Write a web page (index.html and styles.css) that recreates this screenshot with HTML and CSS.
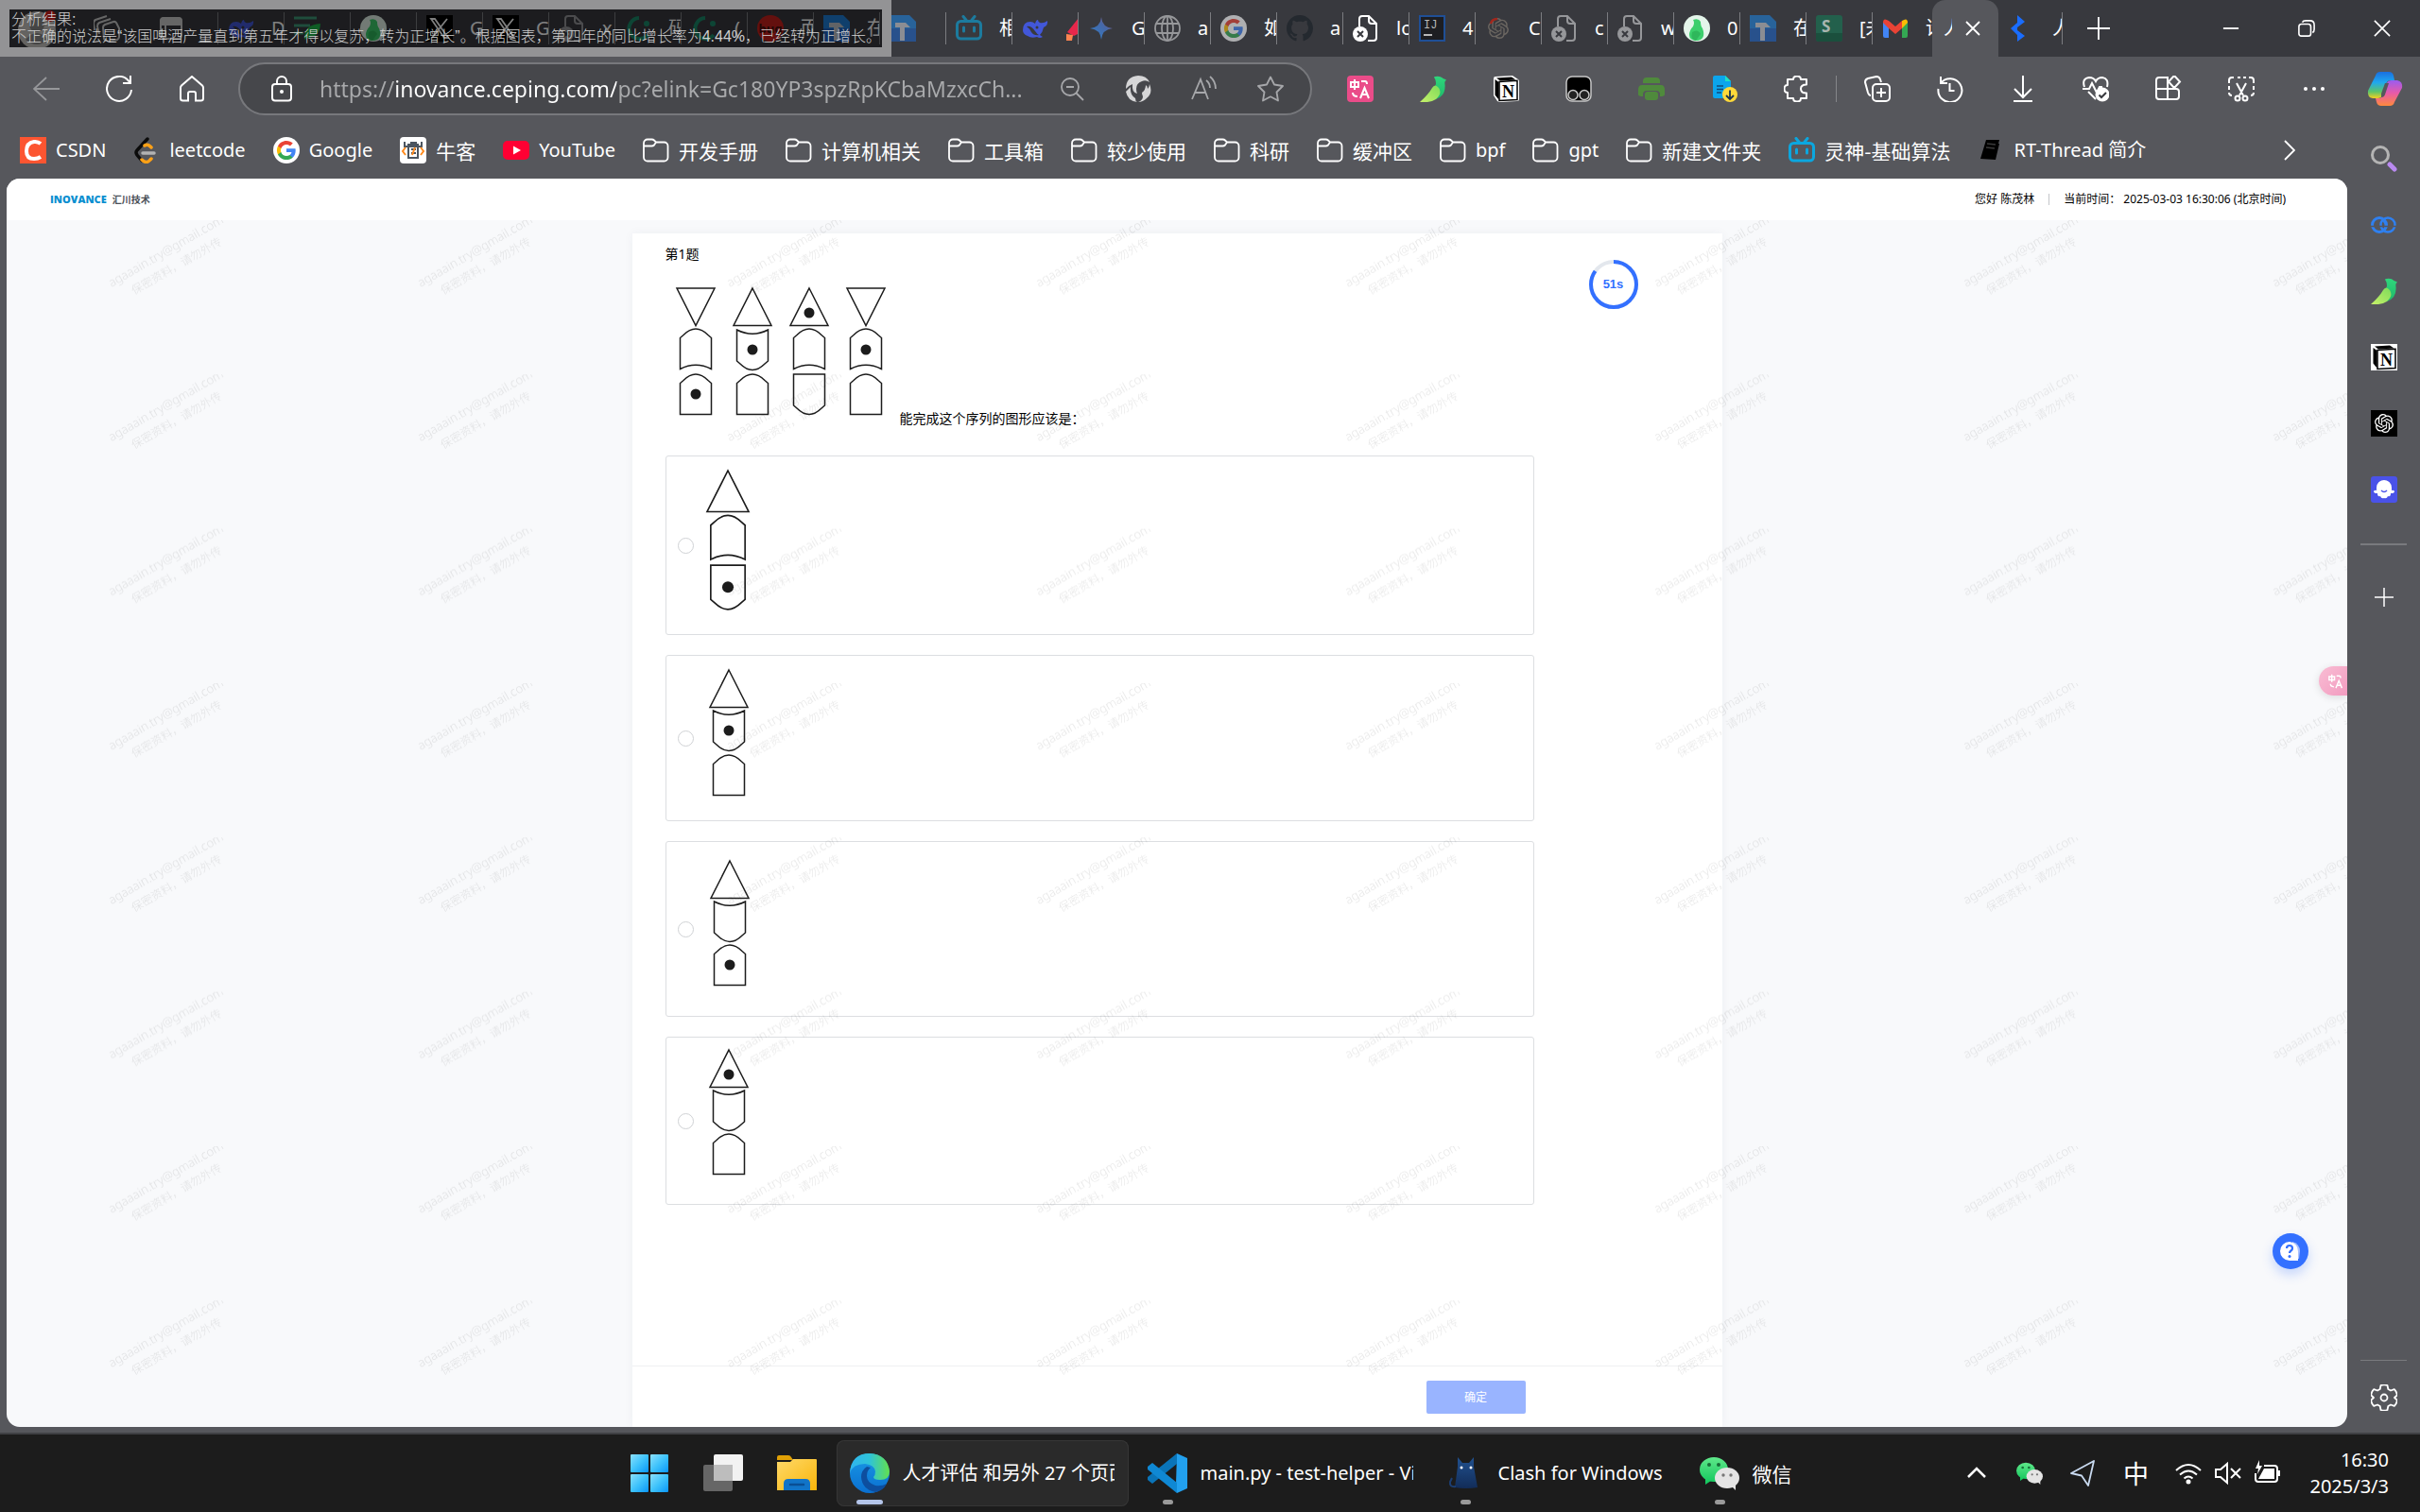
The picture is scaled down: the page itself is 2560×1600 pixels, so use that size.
FILE: index.html
```html
<!DOCTYPE html>
<html lang="zh-CN">
<head>
<meta charset="utf-8">
<title>人才评估</title>
<link rel="stylesheet" href="styles.css">
</head>
<body>
<svg class="defs" aria-hidden="true">
  <defs>
    <linearGradient id="g-bird" x1="0" y1="0" x2="0" y2="1"><stop offset="0" stop-color="#2fd67c"/><stop offset="1" stop-color="#1fb96a"/></linearGradient>
    <linearGradient id="g-wing" x1="0" y1="1" x2="1" y2="0"><stop offset="0" stop-color="#c8f06a"/><stop offset="1" stop-color="#7ddc5a"/></linearGradient>
    <linearGradient id="g-gem" x1="0" y1="1" x2="1" y2="0"><stop offset="0" stop-color="#2f7fc8"/><stop offset=".6" stop-color="#4668a8"/><stop offset="1" stop-color="#9a5a78"/></linearGradient>
    <linearGradient id="g-win" x1="0" y1="0" x2="1" y2="1"><stop offset="0" stop-color="#8be0fd"/><stop offset=".5" stop-color="#3fc3fb"/><stop offset="1" stop-color="#0a96f7"/></linearGradient>
    <linearGradient id="g-folder" x1="0" y1="0" x2="1" y2="1"><stop offset="0" stop-color="#ffd968"/><stop offset="1" stop-color="#f9b50a"/></linearGradient>
    <linearGradient id="g-edge" x1="0" y1="0" x2="1" y2="0"><stop offset="0" stop-color="#2fb4f0"/><stop offset=".5" stop-color="#2fc3d8"/><stop offset="1" stop-color="#63e04c"/></linearGradient>
    <linearGradient id="g-edge2" x1="0" y1="0" x2="0" y2="1"><stop offset="0" stop-color="#1a9ae6"/><stop offset="1" stop-color="#0a6fd0"/></linearGradient>
    <linearGradient id="g-cop1" x1="0" y1="0" x2="0" y2="1"><stop offset="0" stop-color="#1a6fe0"/><stop offset=".4" stop-color="#1fa8f0"/><stop offset=".75" stop-color="#5cc46a"/><stop offset="1" stop-color="#f4d020"/></linearGradient>
    <linearGradient id="g-cop2" x1="0" y1="0" x2="0" y2="1"><stop offset="0" stop-color="#9a5cf0"/><stop offset=".5" stop-color="#e85aa8"/><stop offset="1" stop-color="#ff8a3c"/></linearGradient>
    <linearGradient id="g-wx" x1="0" y1="0" x2="0" y2="1"><stop offset="0" stop-color="#5fe88a"/><stop offset="1" stop-color="#10c65c"/></linearGradient>
    <linearGradient id="g-cat" x1="0" y1="0" x2="0" y2="1"><stop offset="0" stop-color="#21518f"/><stop offset="1" stop-color="#122c58"/></linearGradient>

    <path id="f-up" d="M0 0L20 39.500H-20Z"/>
    <path id="f-down" d="M-20 0H20L0 39.500Z"/>
    <path id="f-arch" d="M-16.500 42.500V9.500L-13 6.500Q0 -6.500 13 6.500L16.500 9.500V42.500Q0 34 -16.500 42.500Z"/>
    <path id="f-bowl" d="M-16.500 0Q0 8.500 16.500 0V33L13 36Q0 49 -13 36L-16.500 33Z"/>
    <path id="f-house" d="M-16.500 42.500V9.500L-13 6.500Q0 -6.500 13 6.500L16.500 9.500V42.500Z"/>
    <path id="f-cup" d="M-16.500 0H16.500V33L13 36Q0 49 -13 36L-16.500 33Z"/>

    <symbol id="i-folder" viewBox="0 0 28 28"><path d="M1 6.500a4 4 0 0 1 4-4h4.500q1.500 0 2.500 1l2 2h8.500a4 4 0 0 1 4 4v12a4 4 0 0 1-4 4H5a4 4 0 0 1-4-4ZM1 9.500h8.500q1.500 0 2.500-1l2-3" fill="none" stroke="#fff" stroke-width="1.800"/></symbol>
    <symbol id="i-google" viewBox="0 0 24 24"><path fill="#4285f4" d="M22.560 12.250c0-.78-.07-1.530-.2-2.250H12v4.260h5.920c-.26 1.370-1.040 2.530-2.210 3.310v2.770h3.570c2.080-1.920 3.280-4.740 3.280-8.090z"/><path fill="#34a853" d="M12 23c2.970 0 5.460-.98 7.280-2.660l-3.570-2.770c-.98.660-2.230 1.060-3.710 1.060-2.860 0-5.290-1.930-6.160-4.530H2.180v2.840C3.990 20.530 7.700 23 12 23z"/><path fill="#fbbc05" d="M5.840 14.090c-.22-.66-.35-1.360-.35-2.090s.13-1.430.35-2.090V7.070H2.180C1.430 8.550 1 10.220 1 12s.43 3.450 1.180 4.930l2.850-2.220.81-.62z"/><path fill="#ea4335" d="M12 5.380c1.620 0 3.060.56 4.210 1.640l3.150-3.150C17.450 2.090 14.970 1 12 1 7.700 1 3.990 3.470 2.180 7.070l3.660 2.840c.87-2.600 3.300-4.530 6.160-4.530z"/></symbol>
    <symbol id="i-google-disc" viewBox="0 0 28 28"><circle cx="14" cy="14" r="14" fill="#fff"/><use href="#i-google" x="3" y="3" width="22" height="22"/></symbol>
    <symbol id="i-bird" viewBox="0 0 28 28"><path d="M15 2q0-1 1.500-1 5-1 8 2l2.500 1q1.500.5 0 1.500-1 1-.5 4 1 12-9.500 15.500L12 20 17 9Q17 4 15 2Z" fill="url(#g-bird)"/><path d="M0 28Q9 20 13 13q3-5 7 0 4 6-3 12-6 4-17 3Z" fill="url(#g-wing)"/></symbol>
    <symbol id="i-birddisc" viewBox="0 0 28 28"><circle cx="14" cy="14" r="14" fill="#e4f5ea"/><path d="M10 5q6-2 8 2 0 5 2 7 4 11-5 13-9 0-9-6 0-5 4-9 2-4 0-7Z" fill="#3ccf6c"/><path d="M9 18q6-4 9 2l-5 7q-6-1-4-9Z" fill="#2fb75b"/></symbol>
    <symbol id="i-bili" viewBox="0 0 28 28"><path d="M8 1.500l4 5M20 1.500l-4 5" stroke="#0ba7df" stroke-width="3" stroke-linecap="round"/><rect x="1.500" y="6.500" width="25" height="18.500" rx="4" fill="none" stroke="#0ba7df" stroke-width="3"/><path d="M8.500 13v4M19.500 13v4" stroke="#0ba7df" stroke-width="3" stroke-linecap="round"/></symbol>
    <symbol id="i-docx" viewBox="0 0 28 28"><path d="M7 12V4q0-3 3-3h7l8 8v15q0 3-3 3h-6M17 1v5q0 3 3 3h5" fill="none" stroke="currentColor" stroke-width="2"/><circle cx="8" cy="20" r="8" fill="currentColor"/><path d="M5 17l6 6M11 17l-6 6" stroke="#38393e" stroke-width="2"/></symbol>
    <symbol id="i-whale" viewBox="0 0 28 28"><path d="M1 16q0-9 8-9 3 0 5 2 1-4 3-4 0 2 2 3 4 1 8-2 1 5-4 7-1 5-4 8l3 2q-3 2-6 0-6 2-10-1-5-2-5-6Z" fill="#4257d8"/><path d="M5 12q5-1 9 5 2 3 4 4-5 1-8-3-2-4-5-6Z" fill="#38393e"/><circle cx="16" cy="13" r="1.500" fill="#38393e"/></symbol>
    <symbol id="i-juejin" viewBox="0 0 28 28"><path d="M0 0h21l7 7v21H0Z" fill="#1e7fd8"/><path d="M0 14h28v14H0Z" fill="#1f4fb0" opacity=".6"/><path d="M6 8h11l5 5h-6v14h-5V13H6Z" fill="#c2c6cc"/></symbol>
    <symbol id="i-x" viewBox="0 0 28 28"><rect width="28" height="28" fill="#000"/><path d="M5 4h4l14 20h-4ZM22 4L6 24" fill="none" stroke="#fff" stroke-width="1.800"/></symbol>
    <symbol id="i-ring" viewBox="0 0 28 28"><path d="M15 3a11 11 0 1 0 9 18" fill="none" stroke="#1a8b6a" stroke-width="4"/><circle cx="23" cy="9" r="3" fill="#1a8b6a"/></symbol>
    <symbol id="i-github" viewBox="0 0 16 16"><path fill="#24292f" d="M8 0C3.580 0 0 3.580 0 8c0 3.540 2.290 6.530 5.470 7.590.4.070.55-.17.55-.38 0-.19-.01-.82-.01-1.490-2.010.370-2.530-.49-2.690-.94-.09-.23-.48-.94-.82-1.130-.28-.15-.68-.52-.01-.53.63-.01 1.080.580 1.230.820.72 1.210 1.870.870 2.330.660.07-.52.28-.87.51-1.070-1.780-.2-3.640-.89-3.640-3.950 0-.87.31-1.590.820-2.150-.08-.2-.36-1.020.08-2.120 0 0 .67-.21 2.200.820.640-.18 1.320-.27 2-.27s1.360.090 2 .27c1.530-1.040 2.200-.82 2.200-.82.44 1.100.160 1.920.080 2.120.510.560.820 1.270.820 2.150 0 3.070-1.870 3.750-3.650 3.950.290.250.540.730.540 1.480 0 1.070-.01 1.930-.01 2.200 0 .21.15.46.55.38A8 8 0 0016 8c0-4.420-3.580-8-8-8z"/></symbol>
    <symbol id="i-openai" viewBox="0 0 24 24"><path d="M22.2819 9.8211a5.9847 5.9847 0 0 0-.5157-4.9108 6.0462 6.0462 0 0 0-6.5098-2.9A6.0651 6.0651 0 0 0 4.9807 4.1818a5.9847 5.9847 0 0 0-3.9977 2.9 6.0462 6.0462 0 0 0 .7427 7.0966 5.98 5.98 0 0 0 .511 4.9107 6.051 6.051 0 0 0 6.5146 2.9001A5.9847 5.9847 0 0 0 13.2599 24a6.0557 6.0557 0 0 0 5.7718-4.2058 5.9894 5.9894 0 0 0 3.9977-2.9001 6.0557 6.0557 0 0 0-.7475-7.0729zm-9.022 12.6081a4.4755 4.4755 0 0 1-2.8764-1.0408l.1419-.0804 4.7783-2.7582a.7948.7948 0 0 0 .3927-.6813v-6.7369l2.02 1.1686a.071.071 0 0 1 .038.052v5.5826a4.504 4.504 0 0 1-4.4945 4.4944zm-9.6607-4.1254a4.4708 4.4708 0 0 1-.5346-3.0137l.142.0852 4.783 2.7582a.7712.7712 0 0 0 .7806 0l5.8428-3.3685v2.3324a.0804.0804 0 0 1-.0332.0615L9.74 19.9502a4.4992 4.4992 0 0 1-6.1408-1.6464zM2.3408 7.8956a4.485 4.485 0 0 1 2.3655-1.9728V11.6a.7664.7664 0 0 0 .3879.6765l5.8144 3.3543-2.0201 1.1685a.0757.0757 0 0 1-.071 0l-4.8303-2.7865A4.504 4.504 0 0 1 2.3408 7.872zm16.5963 3.8558L13.1038 8.364 15.1192 7.2a.0757.0757 0 0 1 .071 0l4.8303 2.7913a4.4944 4.4944 0 0 1-.6765 8.1042v-5.6772a.79.79 0 0 0-.407-.667zm2.0107-3.0231l-.142-.0852-4.7735-2.7818a.7759.7759 0 0 0-.7854 0L9.409 9.2297V6.8974a.0662.0662 0 0 1 .0284-.0615l4.8303-2.7866a4.4992 4.4992 0 0 1 6.6802 4.66zM8.3065 12.863l-2.02-1.1638a.0804.0804 0 0 1-.038-.0567V6.0742a4.4992 4.4992 0 0 1 7.3757-3.4537l-.142.0805L8.704 5.459a.7948.7948 0 0 0-.3927.6813zm1.0976-2.3654l2.602-1.4998 2.6069 1.4998v2.9994l-2.5974 1.4997-2.6067-1.4997Z" fill="currentColor"/></symbol>
    <symbol id="i-trans" viewBox="0 0 28 28"><path d="M4 7h8v5H4ZM8 4v11" fill="none" stroke="#fff" stroke-width="2"/><path d="M15 6h4q2 0 2 3M6 18q0 4 5 4M14 24l4.500-11L23 24M16 20h5" fill="none" stroke="#fff" stroke-width="2"/></symbol>
    <symbol id="i-notion" viewBox="0 0 28 28"><path d="M1 3q0-2 2-2L21 0l6 4q1 1 1 2v19q0 2-2 2L8 28q-2 0-3-1l-4-6Z" fill="#fff"/><path d="M2.500 4l4 3v18.500l-4-5ZM4 2.500L20 1.500l4.500 3L8 5.500Z" fill="#000"/><path d="M7 6.500l19-1.200V25.500L7 26.500Z" fill="#fff" stroke="#000" stroke-width="1.500"/><text x="16.500" y="22.500" text-anchor="middle" font-family="Liberation Serif, serif" font-weight="bold" font-size="18">N</text></symbol>
    <symbol id="i-wx" viewBox="0 0 42 42"><path d="M15 4a15 13 0 1 0 0 26q2 0 4-.5a15 13 0 0 0 11-12A15 13 0 0 0 15 4ZM6 27l0 6 6-4Z" fill="url(#g-wx)"/><circle cx="10" cy="12" r="2" fill="#186f39"/><circle cx="20" cy="12" r="2" fill="#186f39"/><ellipse cx="29" cy="26" rx="13" ry="11" fill="#e4e4e4"/><path d="M34 35l4 4V32Z" fill="#e4e4e4"/><circle cx="25" cy="23" r="1.700" fill="#777"/><circle cx="33" cy="23" r="1.700" fill="#777"/></symbol>
  </defs>
</svg>

<div class="browser">
  <header class="tabstrip">
    <div class="tab-tools">
      <svg class="avatar" viewBox="0 0 40 44"><circle cx="20" cy="24" r="20" fill="#c9c6c2"/><circle cx="20" cy="18" r="8" fill="#8a8a8a"/><path d="M8 34q12-14 24 0-12 10-24 0Z" fill="#8a8a8a"/><circle cx="34" cy="9" r="6" fill="#d31f1f"/></svg>
      <svg class="ic" viewBox="0 0 28 28"><path d="M10 13q0-2 2-3l9-3q2-.5 3 1l3 6v9q0 2-2 3l-10 2q-3 0-4-3ZM6 20l-2-8q0-3 2-4l12-4M1 16L0 9q0-3 2-4l12-4" fill="none" stroke="#ccc" stroke-width="2"/></svg>
      <svg class="ic" viewBox="0 0 28 28"><rect x="3" y="3" width="22" height="22" rx="4" fill="none" stroke="#ccc" stroke-width="2"/><path d="M3 10V6q0-3 3-3h16q3 0 3 3v4ZM8 10v15" fill="#ccc" stroke="#ccc" stroke-width="2"/></svg>
    </div>
    <nav class="tabs">
      <a class="tab" href="#"><svg class="ic"><use href="#i-whale"/></svg><span>D</span></a>
      <a class="tab" href="#"><svg class="ic" viewBox="0 0 28 28"><path d="M0 3h24M0 11h17M0 19h10" stroke="#3f9a78" stroke-width="3"/><path d="M11 26q-1-16 17-17-1 15-14 15Z" fill="#1fb84a"/></svg><span></span></a>
      <a class="tab" href="#"><svg class="ic"><use href="#i-birddisc"/></svg><span></span></a>
      <a class="tab" href="#"><svg class="ic"><use href="#i-x"/></svg><span>G</span></a>
      <a class="tab" href="#"><svg class="ic"><use href="#i-x"/></svg><span>G</span></a>
      <a class="tab faded" href="#"><svg class="ic"><use href="#i-docx"/></svg><span>x</span></a>
      <a class="tab" href="#"><svg class="ic"><use href="#i-ring"/></svg><span>码</span></a>
      <a class="tab" href="#"><svg class="ic"><use href="#i-ring"/></svg><span>(</span></a>
      <a class="tab" href="#"><svg class="ic" viewBox="0 0 28 28"><circle cx="14" cy="14" r="14" fill="#c8201c"/><text x="14" y="19" text-anchor="middle" font-family="Noto Sans, sans-serif" font-weight="bold" font-size="13" fill="#44100e">bug</text></svg><span>而</span></a>
      <a class="tab" href="#"><svg class="ic"><use href="#i-juejin"/></svg><span>在</span></a>
      <a class="tab dim" href="#"><svg class="ic"><use href="#i-juejin"/></svg><span></span></a>
      <a class="tab dim" href="#"><svg class="ic"><use href="#i-bili"/></svg><span>相</span></a>
      <a class="tab" href="#"><svg class="ic"><use href="#i-whale"/></svg><span><svg class="rocket" viewBox="0 0 20 28"><path d="M2 18L14 3l3 3v12l-8 4Z" fill="#e8274b"/><path d="M1 20l7 1-1 6H1Z" fill="#ff8450"/></svg></span></a>
      <a class="tab" href="#"><svg class="ic" viewBox="0 0 28 28"><path d="M14 2Q15 13 26 14 15 15 14 26 13 15 2 14 13 13 14 2Z" fill="url(#g-gem)"/></svg><span>G</span></a>
      <a class="tab faded" href="#"><svg class="ic" viewBox="0 0 28 28" fill="none" stroke="currentColor" stroke-width="1.800"><circle cx="14" cy="14" r="13"/><ellipse cx="14" cy="14" rx="6" ry="13"/><path d="M2 9h24M2 19h24M14 1v26"/></svg><span>a</span></a>
      <a class="tab dim" href="#"><svg class="ic"><use href="#i-google-disc"/></svg><span>如</span></a>
      <a class="tab" href="#"><svg class="ic"><use href="#i-github"/></svg><span>a</span></a>
      <a class="tab" href="#"><svg class="ic"><use href="#i-docx"/></svg><span>lo</span></a>
      <a class="tab" href="#"><svg class="ic" viewBox="0 0 28 28"><rect x="1" y="1" width="26" height="26" fill="#1d1e22" stroke="#1f4f96" stroke-width="2"/><text x="5" y="14" font-family="Liberation Mono, monospace" font-size="12" fill="#b8b8b8">IJ</text><path d="M5 21h9" stroke="#b8b8b8" stroke-width="2"/></svg><span>4</span></a>
      <a class="tab" href="#"><svg class="ic gpt" viewBox="0 0 28 28"><use href="#i-openai" x="3" y="3" width="22" height="22"/><path d="M6 9q1-5 7-5" fill="none" stroke="#a3261c" stroke-width="2.500"/></svg><span>C</span></a>
      <a class="tab faded" href="#"><svg class="ic"><use href="#i-docx"/></svg><span>c</span></a>
      <a class="tab faded" href="#"><svg class="ic"><use href="#i-docx"/></svg><span>w</span></a>
      <a class="tab" href="#"><svg class="ic"><use href="#i-birddisc"/></svg><span>0</span></a>
      <a class="tab dim" href="#"><svg class="ic"><use href="#i-juejin"/></svg><span>在</span></a>
      <a class="tab" href="#"><svg class="ic" viewBox="0 0 28 28"><rect width="28" height="28" rx="3" fill="#23604c"/><path d="M0 19h28v6q0 3-3 3H3q-3 0-3-3Z" fill="#1b4f3d"/><text x="6" y="18" font-family="Noto Sans, sans-serif" font-weight="bold" font-size="17" fill="#a9b5b0">S</text></svg><span>[未</span></a>
      <a class="tab last" href="#"><svg class="ic" viewBox="0 0 28 28"><path d="M1 7v15q0 2 2 2h4V12Z" fill="#4285f4"/><path d="M27 7v15q0 2-2 2h-4V12Z" fill="#34a853"/><path d="M21 6q6-4 6 2l-6 6Z" fill="#fbbc04"/><path d="M1 8q0-6 6-2l7 6 7-6v8l-7 6-7-6Z" fill="#ea4335"/></svg><span>请</span></a>
      <a class="tab active" href="#"><span>人</span><svg class="close" viewBox="0 0 16 16"><path d="M1 1l14 14M15 1L1 15" stroke="#fff" stroke-width="1.800"/></svg></a>
      <a class="tab" href="#"><svg class="ic" viewBox="0 0 28 28"><path d="M9 0l8 7-8 6ZM9 8v13L2 14ZM9 16l8 6-8 6Z" fill="#1a6dff"/></svg><span>人</span></a>
    </nav>
    <button class="newtab" aria-label="新建标签页"><svg viewBox="0 0 24 24"><path d="M12 0v24M0 12h24" stroke="#fff" stroke-width="1.800"/></svg></button>
    <div class="winctl">
      <button aria-label="最小化"><svg viewBox="0 0 20 20"><path d="M1 10h18" stroke="#fff" stroke-width="2"/></svg></button>
      <button aria-label="还原"><svg viewBox="0 0 20 20"><path d="M1 8q0-3 3-3h8q3 0 3 3v8q0 3-3 3H4q-3 0-3-3ZM5 3q1-2 4-2h5q5 0 5 5v5q0 3-2 4" fill="none" stroke="#fff" stroke-width="1.800"/></svg></button>
      <button aria-label="关闭"><svg viewBox="0 0 20 20"><path d="M1 1l18 18M19 1L1 19" stroke="#fff" stroke-width="1.800"/></svg></button>
    </div>
  </header>

  <div class="toolbar">
    <button class="tool faded" aria-label="后退"><svg class="ic" viewBox="0 0 28 28"><path d="M28 14H1M14 2L1 14l13 12" fill="none" stroke="currentColor" stroke-width="1.800"/></svg></button>
    <button class="tool" aria-label="刷新"><svg class="ic" viewBox="0 0 28 28"><path d="M27 15A13 13 0 1 1 24 5.500l2 2M26 0v8h-8" fill="none" stroke="#fff" stroke-width="2"/></svg></button>
    <button class="tool" aria-label="主页"><svg class="ic" viewBox="0 0 28 28"><path d="M2 13q0-1.500 1-2.500L14 1l11 9.500q1 1 1 2.500v11q0 2.500-2.500 2.500H18V19q0-2-2-2h-4q-2 0-2 2v7.500H4.500Q2 26.500 2 24Z" fill="none" stroke="#fff" stroke-width="2"/></svg></button>
    <div class="address">
      <svg class="ic" viewBox="0 0 28 28"><rect x="4" y="9" width="20" height="17.500" rx="3" fill="none" stroke="#fff" stroke-width="2"/><path d="M9 9V6a5 5 0 0 1 10 0v3" fill="none" stroke="#fff" stroke-width="2"/><circle cx="14" cy="17" r="2" fill="#fff"/></svg>
      <input class="url" type="text" aria-label="地址" value="https://inovance.ceping.com/pc?elink=Gc180YP3spzRpKCbaMzxcCh...">
      <button class="act" aria-label="缩小"><svg class="ic" viewBox="0 0 28 28"><circle cx="12" cy="12" r="9" fill="none" stroke="#a6a7aa" stroke-width="1.800"/><path d="M18.500 18.500L26 26M8 12h8" stroke="#a6a7aa" stroke-width="1.800"/></svg></button>
      <button class="act" aria-label="扩展"><svg class="ic" viewBox="0 0 28 28"><path d="M1 14Q1 1 14 0q9 0 12 7-4-3-8-1-6 2-6 8 0 3 1 5Q7 18 8 9 3 11 1 14Z" fill="#d6d6d7"/><path d="M26 9q4 9-3 15-4 4-9 4 5-2 5-6-1-2-1-4 4-3 4-8 2 1 2 4 2-2 2-5ZM1 17q3-3 5-5-1 8 5 12 0 3 2 4Q3 27 1 17Z" fill="#d6d6d7"/></svg></button>
      <button class="act" aria-label="朗读"><svg class="ic" viewBox="0 0 28 28" fill="none" stroke="#a6a7aa" stroke-width="1.800"><path d="M1 25L10 4l8 21M4 18h11M16 5q4 3 4 8M20 1q6 5 6 13"/></svg></button>
      <button class="act" aria-label="收藏"><svg class="ic" viewBox="0 0 28 28"><path d="M14 1.500l4 8 9 1.500-6.500 6.500 1.500 9-8-4.200-8 4.200 1.500-9L1 11l9-1.500Z" fill="none" stroke="#a6a7aa" stroke-width="1.800" stroke-linejoin="round"/></svg></button>
    </div>
    <button class="tool" aria-label="翻译"><svg class="ic" viewBox="0 0 28 28"><rect width="28" height="28" rx="4" fill="#ea4c89"/><use href="#i-trans"/></svg></button>
    <button class="tool" aria-label="小鸟"><svg class="ic"><use href="#i-bird"/></svg></button>
    <button class="tool" aria-label="Notion"><svg class="ic"><use href="#i-notion"/></svg></button>
    <button class="tool" aria-label="脚本"><svg class="ic" viewBox="0 0 28 28"><rect x="1" y="1" width="26" height="26" rx="6" fill="#000" stroke="#c8c8c8" stroke-width="1.500"/><circle cx="8" cy="20.500" r="5" fill="#222" stroke="#c8c8c8" stroke-width="1.500"/><circle cx="20" cy="20.500" r="5" fill="#222" stroke="#c8c8c8" stroke-width="1.500"/></svg></button>
    <button class="tool" aria-label="打印"><svg class="ic" viewBox="0 0 28 28" fill="#4f8a3c"><path d="M5 8V6q0-4 4-4h10q4 0 4 4v2ZM0 15q0-5 4-5h20q4 0 4 5v5q0 2-5 2v-2q0-4-4-4H9q-4 0-4 4v2q-5 0-5-2Z"/><rect x="7" y="17" width="14" height="9" rx="3"/></svg></button>
    <button class="tool" aria-label="文档下载"><svg class="ic" viewBox="0 0 28 28"><path d="M2 2q0-2 2-2h11l6 6v16q0 2-2 2H4q-2 0-2-2Z" fill="#0ba5ec"/><path d="M15 0l6 6h-6Z" fill="#1fe0c4"/><path d="M6 11h7M6 14.500h7M6 18h5" stroke="#104a78" stroke-width="1.500"/><circle cx="20" cy="20" r="8" fill="#ffd93a"/><path d="M20 15.500v9M16 21l4 4 4-4" fill="none" stroke="#1d3550" stroke-width="1.800"/></svg></button>
    <button class="tool" aria-label="扩展程序"><svg class="ic" viewBox="0 0 28 28"><path d="M4 4h6q0-3.500 4-3.500T18 4h6v5.500q-6 0-6 4.500t6 4.500V24h-6q0 3.500-4 3.500T10 24H4v-6q-3.500 0-3.500-4T4 10Z" fill="none" stroke="#fff" stroke-width="2" stroke-linejoin="round"/></svg></button>
    <span class="divider"></span>
    <button class="tool" aria-label="集锦"><svg class="ic" viewBox="0 0 28 28" fill="none" stroke="#fff" stroke-width="2"><rect x="9" y="9" width="18" height="18" rx="4"/><path d="M18 13v10M13 18h10M7 21q-2 0-3-3L1 7q0-3 3-4l9-2q3 0 4 3l1 3"/></svg></button>
    <button class="tool" aria-label="历史记录"><svg class="ic" viewBox="0 0 28 28" fill="none" stroke="#fff" stroke-width="2"><path d="M4 1v7h7M4 8a12.500 12.500 0 1 1-2.500 6M13.500 8v8h5"/></svg></button>
    <button class="tool" aria-label="下载"><svg class="ic" viewBox="0 0 28 28" fill="none" stroke="#fff" stroke-width="2"><path d="M14 0v22M5 14l9 9 9-9M4 27h20"/></svg></button>
    <button class="tool" aria-label="浏览器概要"><svg class="ic" viewBox="0 0 28 28" fill="none" stroke="#fff" stroke-width="2"><path d="M2 12Q-1 3 7 2q5 0 7 4 2-4 7-4 7 1 5 10M0 14h7l3-6 5 10 3-6h3M6 17l8 8"/><circle cx="21" cy="20" r="7.500" fill="#fff" stroke="none"/><path d="M17.500 20.500l2.500 2.500 5-5" stroke="#38393e"/></svg></button>
    <button class="tool" aria-label="应用"><svg class="ic" viewBox="0 0 28 28" fill="none" stroke="#fff" stroke-width="2"><path d="M13 14V2H4Q1 2 1 5v17q0 3 3 3h18q3 0 3-3v-5q0-3-3-3H1M13 14v11M20 0l6 6.500-6 6.500-6-6.500Z"/></svg></button>
    <button class="tool" aria-label="截图"><svg class="ic" viewBox="0 0 28 28" fill="none" stroke="#fff" stroke-width="2"><path d="M1 8V5q0-3 3-3h2M10 2h3M16 2h3M22 2h2q3 0 3 3v3M27 11v4M27 18q0 3-3 3M1 11v4M1 18q0 3 3 3M9 8l7 13M19 8l-7 13"/><circle cx="10" cy="24" r="2.500"/><circle cx="18" cy="24" r="2.500"/></svg></button>
    <button class="tool" aria-label="更多"><svg class="ic" viewBox="0 0 28 28" fill="#fff"><circle cx="5" cy="14" r="2"/><circle cx="14" cy="14" r="2"/><circle cx="23" cy="14" r="2"/></svg></button>
    <button class="tool" aria-label="Copilot"><svg class="copilot" viewBox="0 0 38 38"><path d="M9 5q1-4 5-4h9q4 0 5 4l1 5h-4q-4 0-5 4l-4 12q-1 3-5 3H6q-6-1-5-8Z" fill="url(#g-cop1)"/><path d="M29 33q-1 4-5 4h-9q-4 0-5-4l-1-4h3q4 0 5-4l4-12q1-3 5-3h6q6 1 5 8Z" fill="url(#g-cop2)"/><path d="M15 24l4-11h4l-4 12q-1 3-4 3Z" fill="#56575c"/></svg></button>
  </div>

  <div class="body">
    <div class="main">
      <nav class="bookmarks">
        <a href="#"><svg class="ic" viewBox="0 0 28 28"><rect width="28" height="28" fill="#fc5531"/><path d="M22 7Q19 4.500 15 5 7 6 7 15q0 8 8 8 4 0 7-2" fill="none" stroke="#fff" stroke-width="4"/></svg>CSDN</a>
        <a href="#"><svg class="ic" viewBox="0 0 28 28" fill="none" stroke-width="3.500" stroke-linecap="round"><path d="M15 2L4 14q-2 2 0 5l5 6" stroke="#0b0b0b"/><path d="M12 9q3-2 6 1l1 1M9 24q5 5 9 0l1-1" stroke="#ffa116"/><path d="M10 17h12" stroke="#b3b3b3"/></svg>leetcode</a>
        <a href="#"><svg class="ic"><use href="#i-google-disc"/></svg>Google</a>
        <a class="cjk" href="#"><svg class="ic" viewBox="0 0 28 28"><rect width="28" height="28" rx="4" fill="#fff"/><path d="M5 5v5h18V5M9 8h10v14H9ZM12 13h5M12 17h5M11 6h7" fill="none" stroke="#4b5560" stroke-width="2"/><path d="M6 11l-3 4 3 4M22 11l3 4-3 4M16 11l-3 8" fill="none" stroke="#ff8a1c" stroke-width="2"/></svg>牛客</a>
        <a href="#"><svg class="ic" viewBox="0 0 28 28"><rect y="4" width="28" height="20" rx="5" fill="#ff0033"/><path d="M11 9.500l8 4.500-8 4.500Z" fill="#fff"/></svg>YouTube</a>
        <a class="cjk" href="#"><svg class="ic"><use href="#i-folder"/></svg>开发手册</a>
        <a class="cjk" href="#"><svg class="ic"><use href="#i-folder"/></svg>计算机相关</a>
        <a class="cjk" href="#"><svg class="ic"><use href="#i-folder"/></svg>工具箱</a>
        <a class="cjk" href="#"><svg class="ic"><use href="#i-folder"/></svg>较少使用</a>
        <a class="cjk" href="#"><svg class="ic"><use href="#i-folder"/></svg>科研</a>
        <a class="cjk" href="#"><svg class="ic"><use href="#i-folder"/></svg>缓冲区</a>
        <a href="#"><svg class="ic"><use href="#i-folder"/></svg>bpf</a>
        <a href="#"><svg class="ic"><use href="#i-folder"/></svg>gpt</a>
        <a class="cjk" href="#"><svg class="ic"><use href="#i-folder"/></svg>新建文件夹</a>
        <a class="cjk" href="#"><svg class="ic"><use href="#i-bili"/></svg>灵神-基础算法</a>
        <a href="#"><svg class="ic" viewBox="0 0 28 28"><path d="M8 3h14l-1 4h1l-4 17-16-1Z" fill="#000"/><path d="M9 7l9 1M8 11l9 1" fill="none" stroke="#3a3a3a" stroke-width="1.500"/></svg>RT-Thread 简介</a>
        <button class="overflow" aria-label="更多书签"><svg viewBox="0 0 12 22"><path d="M1 1l10 10L1 21" fill="none" stroke="#fff" stroke-width="1.800"/></svg></button>
      </nav>

      <main class="page">
        <header class="site-head">
          <a class="logo" href="#"><b>INOVANCE</b><span>汇川技术</span></a>
          <div class="who"><span>您好 陈茂林</span><i></i><span>当前时间：&nbsp;2025-03-03 16:30:06 (北京时间)</span></div>
        </header>
        <div class="exam">
          <section class="card">
            <div class="card-body">
              <form class="question" id="quiz">
                <h1>第1题</h1>
                <p class="stem">
                  <svg class="series" viewBox="0 0 248 156" role="img" aria-label="图形序列">
                    <g transform="translate(32 13)"><use href="#f-down"/><use href="#f-arch" y="43"/><use href="#f-house" y="91"/><circle cy="112" r="5.500"/></g>
                    <g transform="translate(92 13)"><use href="#f-up"/><use href="#f-bowl" y="44"/><circle cy="65" r="5.500"/><use href="#f-house" y="91"/></g>
                    <g transform="translate(152 13)"><use href="#f-up"/><circle cy="26" r="5.500"/><use href="#f-arch" y="43"/><use href="#f-cup" y="91"/></g>
                    <g transform="translate(212 13)"><use href="#f-down"/><use href="#f-arch" y="43"/><circle cy="65" r="5.500"/><use href="#f-house" y="91"/></g>
                  </svg><span>能完成这个序列的图形应该是：</span>
                </p>
                <div class="options">
                  <label class="option"><input type="radio" name="answer" aria-label="选项A"><svg class="fig" viewBox="0 0 60 188" height="188"><g transform="translate(35 15) scale(1.100)"><use href="#f-up"/><use href="#f-arch" y="43"/><use href="#f-cup" y="91"/><circle cy="112" r="5.500"/></g></svg></label>
                  <label class="option"><input type="radio" name="answer" aria-label="选项B"><svg class="fig" viewBox="0 0 60 174" height="174"><g transform="translate(36 15)"><use href="#f-up"/><use href="#f-bowl" y="43"/><circle cy="64" r="5.500"/><use href="#f-house" y="90"/></g></svg></label>
                  <label class="option"><input type="radio" name="answer" aria-label="选项C"><svg class="fig" viewBox="0 0 60 184" height="184"><g transform="translate(37 20)"><use href="#f-up"/><use href="#f-bowl" y="43"/><use href="#f-house" y="89"/><circle cy="110" r="5.500"/></g></svg></label>
                  <label class="option"><input type="radio" name="answer" aria-label="选项D"><svg class="fig" viewBox="0 0 60 176" height="176"><g transform="translate(36 13)"><use href="#f-up"/><circle cy="26" r="5.500"/><use href="#f-bowl" y="43"/><use href="#f-house" y="89"/></g></svg></label>
                </div>
              </form>
              <div class="timer"><svg viewBox="0 0 52 52"><circle cx="26" cy="26" r="24" fill="none" stroke="#e3e7ed" stroke-width="4"/><circle cx="26" cy="26" r="24" fill="none" stroke="#3370ff" stroke-width="4" pathLength="60" stroke-dasharray="51 9" transform="rotate(-90 26 26)"/></svg><span>51s</span></div>
            </div>
            <footer class="card-foot"><button class="submit" form="quiz">确定</button></footer>
          </section>
          <svg class="watermark" aria-hidden="true">
            <defs><pattern id="wm" width="327" height="163.330" patternUnits="userSpaceOnUse">
              <text class="mail" transform="translate(111 71) rotate(-30)">agaaain.try@gmail.com</text>
              <text transform="translate(135 79) rotate(-30)">保密资料，请勿外传</text>
            </pattern></defs>
            <rect width="100%" height="100%" fill="url(#wm)"/>
          </svg>
        </div>
        <button class="pinktab" aria-label="翻译"><svg viewBox="0 0 28 28"><use href="#i-trans"/></svg></button>
        <button class="help" aria-label="帮助"><svg viewBox="0 0 38 38"><path d="M21 9a10 10 0 0 1 8 10l-1 8h-6Z" fill="#a8c0ff"/><path d="M18 9a10 10 0 1 0 0 20h9V19a10 10 0 0 0-9-10Z" fill="#fff"/><path d="M15 16q0-3 3-3t3 3q0 1.500-1.500 2.500T18 21" fill="none" stroke="#3370ff" stroke-width="2.200"/><circle cx="18" cy="24.500" r="1.500" fill="#3370ff"/></svg></button>
      </main>
    </div>

    <aside class="sidebar">
      <button aria-label="搜索"><svg class="ic" viewBox="0 0 28 28"><circle cx="10" cy="10" r="8.500" fill="none" stroke="#b4b4b4" stroke-width="3"/><path d="M20 20l5 5" stroke="#b98af0" stroke-width="5" stroke-linecap="round"/></svg></button>
      <button aria-label="双环"><svg class="ic" viewBox="0 0 28 28" fill="none" stroke="#2f80f0" stroke-width="3"><circle cx="9" cy="14" r="7.500"/><path d="M18 6.500a7.500 7.500 0 1 1 0 15 7.500 7.500 0 1 1 0-15" stroke-width="2.500"/><path d="M14 9.500q4 5 0 10"/><path d="M0 15.500h28" stroke="#56575c" stroke-width="1.500"/></svg></button>
      <button aria-label="小鸟"><svg class="ic"><use href="#i-bird"/></svg></button>
      <button aria-label="Notion"><svg class="ic" viewBox="0 0 28 28"><rect width="28" height="28" fill="#fff"/><use href="#i-notion"/></svg></button>
      <button aria-label="ChatGPT"><svg class="ic white" viewBox="0 0 28 28"><rect width="28" height="28" fill="#000"/><use href="#i-openai" x="4" y="4" width="20" height="20"/></svg></button>
      <button aria-label="助手"><svg class="ic" viewBox="0 0 28 28"><rect width="28" height="28" rx="3" fill="#4a52e8"/><path d="M6 15V12a8 8 0 0 1 16 0v3q3-1 3 1.500-1 2-4 1.500 0 4-3 3-1 3-4 2-3 1-4-2-3 1-3-3-3 .5-4-1.500 0-2.500 3-1.500Z" fill="#fff"/><path d="M11 15q3 3 6 0" fill="none" stroke="#4a52e8" stroke-width="1.500"/></svg></button>
      <hr>
      <button aria-label="添加"><svg class="ic" viewBox="0 0 28 28"><path d="M14 4v20M4 14h20" stroke="#fff" stroke-width="1.500"/></svg></button>
      <hr class="low">
      <button class="gear" aria-label="设置"><svg class="ic" viewBox="0 0 28 28" fill="none" stroke="#fff" stroke-width="1.800" stroke-linejoin="round"><path d="M10.500 1Q14-.5 17.500 1l.8 4 2.700 1.500 3.800-1.300q2.500 2.500 3.200 6L25 14l3 2.800q-.7 3.500-3.200 6L21 21.500 18.300 23l-.8 4q-3.500 1.500-7 0l-.8-4L7 21.500l-3.800 1.300Q.7 20.300 0 16.800L3 14 0 11.200q.7-3.500 3.200-6L7 6.500 9.700 5Z"/><circle cx="14" cy="14" r="3.500"/></svg></button>
    </aside>
  </div>
</div>

<footer class="taskbar">
  <div class="apps">
    <button class="pin" aria-label="开始"><svg viewBox="0 0 42 42" fill="url(#g-win)"><rect x="1" y="1" width="19" height="19" rx="1"/><rect x="22" y="1" width="19" height="19" rx="1"/><rect x="1" y="22" width="19" height="19" rx="1"/><rect x="22" y="22" width="19" height="19" rx="1"/></svg></button>
    <button class="pin" aria-label="任务视图"><svg viewBox="0 0 42 42"><rect y="12" width="31" height="28" rx="2" fill="#666"/><rect x="11" y="1" width="31" height="28" rx="2" fill="#f2f2f2"/><rect x="11" y="12" width="20" height="17" fill="#bdbdbd"/></svg></button>
    <button class="pin" aria-label="文件资源管理器"><svg viewBox="0 0 42 42"><path d="M0 4q0-2 2-2h10q2 0 3 2l2 3H0Z" fill="#e0a005"/><path d="M0 9h14l3-3h24q1 0 1 1v32H0Z" fill="url(#g-folder)"/><path d="M7 39V32q0-5 5-5h18q5 0 5 5v7Z" fill="#1174c8"/><path d="M14 33h14" stroke="#0a4f94" stroke-width="2.500" stroke-linecap="round"/></svg></button>
    <button class="app wide current"><svg viewBox="0 0 42 42"><circle cx="21" cy="21" r="21" fill="url(#g-edge2)"/><path d="M0 21Q1 0 21 0q19 1 21 19 0 9-10 9-7 0-7-3 2-2 2-6-1-7-11-8Q3 11 0 21Z" fill="url(#g-edge)"/><path d="M18 14q-6 4-6 11 1 13 15 16 8-1 12-9-5 3-12 2-9-3-9-10 0-6 4-9Z" fill="#0d4e9e"/></svg><span class="cut">人才评估 和另外 27 个页面</span></button>
    <button class="app wide"><svg viewBox="0 0 42 42"><path d="M31 0l11 5v32l-11 5-1-10Z" fill="#22a0ee"/><path d="M31 0v11L5 32l-5-4v-3Z" fill="#0a74b8"/><path d="M31 42V31L5 10l-5 4v3Z" fill="#0f88d4"/></svg><span class="cut">main.py - test-helper - Visual</span></button>
    <button class="app clash"><svg viewBox="0 0 42 42"><path d="M10 36l3-22V4l5 6h7l5-6v10l4 22q-12 2-24 0Z" fill="url(#g-cat)"/><path d="M11 35q-7 1-6-5l2-4" fill="none" stroke="#1c3e72" stroke-width="2"/><circle cx="17" cy="15" r="1.500" fill="#fff"/><circle cx="27" cy="15" r="1.500" fill="#fff"/></svg><span>Clash for Windows</span></button>
    <button class="app"><svg><use href="#i-wx"/></svg><span class="cjk">微信</span></button>
  </div>
  <div class="tray">
    <button aria-label="显示隐藏的图标"><svg viewBox="0 0 28 28"><path d="M5 18l9-9 9 9" fill="none" stroke="#fff" stroke-width="2.500"/></svg></button>
    <button aria-label="微信"><svg><use href="#i-wx"/></svg></button>
    <button aria-label="位置"><svg viewBox="0 0 28 28"><path d="M26 1L2 14l11 2.500L20 27Z" fill="none" stroke="#c9daf0" stroke-width="1.800" stroke-linejoin="round"/></svg></button>
    <button class="ime">中</button>
    <div class="status">
      <svg viewBox="0 0 28 28" fill="none" stroke="#fff" stroke-width="2"><path d="M1 11q13-12 26 0M5 15.500q9-8 18 0M9.500 19.500q4.500-4 9 0"/><circle cx="14" cy="23" r="1.500" fill="#fff"/></svg>
      <svg viewBox="0 0 28 28" fill="none" stroke="#fff" stroke-width="2"><path d="M1 10h5l7-6v20l-7-6H1ZM17 9l10 10M27 9L17 19"/></svg>
      <svg viewBox="0 0 28 28" fill="none" stroke="#fff" stroke-width="2"><path d="M10 6h11q3 0 3 3v11q0 3-3 3H4q-3 0-3-3v-6M26 11v6"/><path d="M10 9h11v11H4Z" fill="#fff" stroke="none"/><path d="M5 0L1 9h3l-1 6 5-9H5Z" fill="#fff" stroke="none"/></svg>
    </div>
    <div class="clock"><span>16:30</span><span>2025/3/3</span></div>
  </div>
</footer>

<div class="result">分析结果:<br>不正确的说法是“该国啤酒产量直到第五年才得以复苏，转为正增长”。根据图表，第四年的同比增长率为4.44%，已经转为正增长。</div>
</body>
</html>
```
FILE: styles.css
```css
* { box-sizing: border-box; }
body {
  margin: 0;
  min-height: 100vh;
  display: flex;
  flex-direction: column;
  background: #56575c;
  color: #fff;
  font-family: "Noto Sans", "Noto Sans CJK SC", sans-serif;
  font-size: 20px;
  line-height: 28px;
  overflow-x: hidden;
}
a { color: inherit; text-decoration: none; }
button { border: 0; padding: 0; background: none; color: inherit; font: inherit; }
svg { display: block; flex: none; }
.defs { position: absolute; width: 0; height: 0; }
.ic { width: 28px; height: 28px; }
.white { color: #fff; }
.cjk { font-family: "Noto Sans CJK SC", sans-serif; font-size: 21px; line-height: 26px; }

.browser { flex: 1; display: flex; flex-direction: column; border-bottom: 2px solid #3f4044; }

/* tab strip */
.tabstrip { height: 60px; display: flex; align-items: center; background: #38393e; }
.tab-tools { width: 230px; flex: none; display: flex; align-items: center; gap: 40px; padding-left: 19px; }
.avatar { width: 40px; height: 44px; }
.tabs { display: flex; align-items: center; }
.tab {
  width: 70px;
  height: 34px;
  display: flex;
  align-items: center;
  gap: 18px;
  padding-left: 10px;
  border-left: 1px solid #7b7c80;
  white-space: nowrap;
}
.tab span { flex: 1; min-width: 0; overflow: hidden; }
.tab .rocket { width: 20px; height: 28px; }
.tab.dim .ic { opacity: .6; }
.faded .ic { color: #96979a; }
.gpt { color: #6b6661; }
.tab.last { width: 64px; }
.tab.active {
  height: 60px;
  border: 0;
  padding: 0 19px 0 12px;
  gap: 14px;
  background: #56575c;
  border-radius: 14px 14px 0 0;
}
.tab.active + .tab { border-color: transparent; width: 67px; }
.close { width: 16px; height: 16px; }
.newtab { width: 76px; height: 34px; border-left: 1px solid #7b7c80; display: flex; justify-content: center; align-items: center; }
.newtab svg { width: 24px; height: 24px; }
.winctl { margin-left: auto; display: flex; }
.winctl button { width: 80px; height: 60px; display: flex; align-items: center; justify-content: center; }
.winctl svg { width: 18px; height: 18px; }

/* toolbar */
.toolbar { height: 68px; display: flex; align-items: center; padding-left: 10px; }
.tool { width: 77px; height: 56px; flex: none; display: flex; align-items: center; justify-content: center; }
.toolbar .tool:last-child { width: 74px; }
.address {
  flex: 1;
  height: 56px;
  margin: 0 12px 0 11px;
  padding: 0 7px 0 30px;
  display: flex;
  align-items: center;
  border: 2px solid #77787c;
  border-radius: 28px;
  background: #46474b;
}
.url {
  flex: 1;
  min-width: 0;
  margin-left: 26px;
  padding: 0;
  border: 0;
  outline: 0;
  font: 23px/32px "Noto Sans", sans-serif;
  color: transparent;
  background: linear-gradient(90deg, #a9aaac 79px, #fff 79px, #fff 314px, #a9aaac 314px);
  -webkit-background-clip: text;
  background-clip: text;
}
.act { width: 70px; height: 50px; display: flex; align-items: center; justify-content: center; }
.divider { width: 1px; height: 28px; margin: 0 4px 0 3px; background: #85868a; }
.copilot { width: 38px; height: 38px; }

/* body */
.body { flex: 1; display: flex; }
.main { flex: 1; min-width: 0; display: flex; flex-direction: column; padding: 0 0 6px 7px; }
.bookmarks { height: 61px; display: flex; align-items: center; gap: 29px; padding-left: 14px; white-space: nowrap; }
.bookmarks a { display: flex; align-items: center; gap: 10px; }
.overflow { margin: 0 55px 0 auto; }
.overflow svg { width: 12px; height: 22px; }

.sidebar { width: 77px; display: flex; flex-direction: column; align-items: center; padding: 5px 0 2px; }
.sidebar button { width: 77px; height: 70px; display: flex; align-items: center; justify-content: center; }
.sidebar hr { width: 49px; height: 2px; margin: 22px 0 20px; border: 0; background: #797a7e; }
.sidebar hr.low { height: 1px; margin: auto 0 4px; }

/* page */
.page { flex: 1; position: relative; display: flex; flex-direction: column; border-radius: 14px; overflow: hidden; background: #f8f9fb; color: #000; }
.site-head { height: 44px; display: flex; align-items: center; justify-content: space-between; padding: 0 65px 0 46px; background: #fff; font-size: 12px; line-height: 18px; }
.logo { display: flex; align-items: center; gap: 6px; color: #4a4f57; font-size: 10px; font-weight: bold; }
.logo b { color: #0b8fd0; font-size: 11px; font-family: "Open Sans", "Noto Sans", sans-serif; }
.who { display: flex; align-items: center; gap: 15px; }
.who i { width: 1px; height: 12px; background: #c4c6ca; }
.exam { flex: 1; position: relative; display: flex; justify-content: center; padding-top: 14px; }
.card { width: 100%; max-width: 1153px; display: flex; flex-direction: column; background: #fff; box-shadow: 0 0 10px rgba(40, 60, 90, .05); }
.card-body { flex: 1; display: flex; align-items: flex-start; justify-content: space-between; padding: 11px 89px 0 35px; }
.question { width: 919px; }
h1 { margin: 0; font-size: 14px; line-height: 22px; font-weight: normal; }
.stem { margin: 12px 0 0; display: flex; align-items: flex-end; font-size: 14px; line-height: 22px; }
.stem span { margin-bottom: -6px; }
.series { width: 248px; height: 156px; }
.series, .fig { fill: none; stroke: #1c1c1c; stroke-width: 1.5; }
.series circle, .fig circle { fill: #1c1c1c; stroke: none; }
.options { margin-top: 34px; display: flex; flex-direction: column; gap: 21px; }
.option { display: flex; align-items: center; gap: 1px; padding-left: 12px; border: 1px solid #dcdee1; border-radius: 3px; }
.option input { appearance: none; width: 17px; height: 17px; margin: 0; border: 1px solid #d0d2d5; border-radius: 50%; background: #fff; }
.fig { width: 60px; }
.timer { position: relative; margin-top: 17px; width: 52px; height: 52px; }
.timer span { position: absolute; inset: 0; display: flex; align-items: center; justify-content: center; color: #3370ff; font: bold 13px/18px "Liberation Sans", sans-serif; }
.card-foot { border-top: 1px solid #eff0f2; padding: 15px 208px 14px 0; display: flex; justify-content: flex-end; }
.submit { width: 105px; height: 35px; border-radius: 2px; background: #99b4ff; color: #fff; font-size: 12px; line-height: 18px; }
.watermark { position: absolute; inset: 0; width: 100%; height: 100%; pointer-events: none; }
.watermark text { font: 300 12px "Noto Sans", "Noto Sans CJK SC", sans-serif; fill: rgba(0, 0, 0, .1); }
.watermark .mail { font-size: 13px; }
.pinktab { position: absolute; right: 0; top: 516px; width: 30px; height: 31px; padding-left: 8px; border-radius: 16px 0 0 16px; background: linear-gradient(135deg, #f9bdd4, #f29cc0); box-shadow: 0 2px 8px rgba(0, 0, 0, .12); }
.pinktab svg { width: 20px; height: 20px; }
.help { position: absolute; right: 41px; bottom: 167px; width: 38px; height: 38px; border-radius: 50%; background: #3370ff; box-shadow: 0 6px 12px rgba(51, 112, 255, .25); }

/* taskbar */
.taskbar { height: 82px; display: grid; grid-template-columns: 1fr auto 1fr; align-items: center; background: #1c1c1c; }
.apps { grid-column: 2; display: flex; align-items: center; gap: 6px; }
.pin { width: 72px; height: 70px; display: flex; align-items: center; justify-content: center; }
.apps svg { width: 42px; height: 42px; }
.app { position: relative; height: 70px; display: flex; align-items: center; gap: 14px; padding: 0 14px; border-radius: 8px; white-space: nowrap; }
.app.wide { width: 309px; }
.app.clash { width: 263px; }
.cut { flex: 1; min-width: 0; overflow: hidden; text-align: left; }
.app.current { padding-right: 15px; background: #2a2a2a; box-shadow: inset 0 0 0 1px #363636; }
.app::after { content: ""; position: absolute; left: 30px; bottom: 2px; width: 11px; height: 5px; border-radius: 3px; background: #9a9a9a; }
.app.current::after { left: 21px; width: 28px; background: #b4c5e9; }
.tray { grid-column: 3; justify-self: end; display: flex; align-items: center; padding-right: 33px; }
.tray button { width: 56px; height: 56px; display: flex; align-items: center; justify-content: center; }
.tray svg { width: 28px; height: 28px; }
.ime { font-family: "Noto Sans CJK SC", sans-serif; font-size: 27px; }
.status { display: flex; gap: 14px; margin-left: 14px; }
.clock { margin-left: 30px; display: flex; flex-direction: column; align-items: flex-end; line-height: 28px; }

/* floating result window */
.result { position: absolute; left: 0; top: 0; width: 943px; height: 60px; border: 10px solid #939395; padding: 2px; background: rgba(0, 0, 0, .5); color: #d0d0d0; font: 300 16px/18px "Liberation Sans", "Noto Sans CJK SC", sans-serif; white-space: nowrap; overflow: hidden; }
```
